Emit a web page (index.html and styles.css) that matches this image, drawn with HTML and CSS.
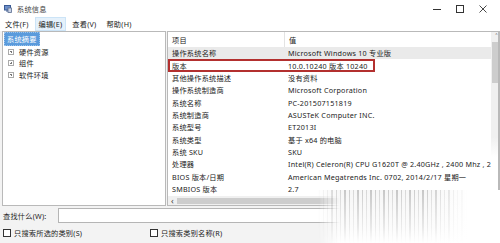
FILE: index.html
```html
<!DOCTYPE html>
<html lang="zh-CN">
  <head>
    <meta charset="UTF-8" />
    <title>系统信息</title>
    <link rel="stylesheet" href="styles.css">
  </head>
  <body>
    <div class="window">
      <!-- Title bar -->
      <div class="titlebar">
        <svg class="app-icon" width="8" height="8" viewBox="0 0 8 8">
          <rect x="0.5" y="0.5" width="6" height="4.5" fill="#6d8fc9" stroke="#3a5a94" stroke-width="1" />
          <rect x="2" y="5.5" width="3" height="1" fill="#3a5a94" />
          <rect x="4" y="3" width="3.5" height="4.5" fill="#c9d3e6" stroke="#5a6d8f" stroke-width="0.8" />
        </svg>
        <span class="title">系统信息</span>
        <div class="controls">
          <svg width="8" height="8" viewBox="0 0 8 8"><path d="M0 4.5h8" stroke="#333" stroke-width="1" /></svg>
          <svg width="8" height="8" viewBox="0 0 8 8"><rect x="0.5" y="0.5" width="7" height="7" fill="none" stroke="#333" stroke-width="1" /></svg>
          <svg width="8" height="8" viewBox="0 0 8 8"><path d="M0.5 0.5l7 7M7.5 0.5l-7 7" stroke="#333" stroke-width="0.9" /></svg>
        </div>
      </div>

      <!-- Menu bar -->
      <div class="menubar">
        <span class="menu-item">文件(F)</span>
        <span class="menu-item active">编辑(E)</span>
        <span class="menu-item">查看(V)</span>
        <span class="menu-item">帮助(H)</span>
      </div>

      <!-- Tree + list -->
      <div class="main">
        <div class="tree">
          <div class="tree-item"><span class="selected">系统摘要</span></div>
          <div class="tree-item sub"><span class="expander"></span>硬件资源</div>
          <div class="tree-item sub"><span class="expander"></span>组件</div>
          <div class="tree-item sub"><span class="expander"></span>软件环境</div>
        </div>

        <div class="list">
          <div class="list-body">
            <div class="row head"><span class="key">项目</span><span class="val">值</span></div>
            <div class="row hover"><span class="key">操作系统名称</span><span class="val">Microsoft Windows 10 专业版</span></div>
            <div class="row"><span class="key">版本</span><span class="val">10.0.10240 版本 10240</span></div>
            <div class="row"><span class="key">其他操作系统描述</span><span class="val">没有资料</span></div>
            <div class="row"><span class="key">操作系统制造商</span><span class="val">Microsoft Corporation</span></div>
            <div class="row"><span class="key">系统名称</span><span class="val">PC-201507151819</span></div>
            <div class="row"><span class="key">系统制造商</span><span class="val">ASUSTeK Computer INC.</span></div>
            <div class="row"><span class="key">系统型号</span><span class="val">ET2013I</span></div>
            <div class="row"><span class="key">系统类型</span><span class="val">基于 x64 的电脑</span></div>
            <div class="row"><span class="key">系统 SKU</span><span class="val">SKU</span></div>
            <div class="row"><span class="key">处理器</span><span class="val">Intel(R) Celeron(R) CPU G1620T @ 2.40GHz , 2400 Mhz , 2</span></div>
            <div class="row"><span class="key">BIOS 版本/日期</span><span class="val">American Megatrends Inc. 0702, 2014/2/17 星期一</span></div>
            <div class="row"><span class="key">SMBIOS 版本</span><span class="val">2.7</span></div>
            <div class="highlight"></div>
          </div>
          <div class="vscroll">
            <span class="arrow">&#708;</span>
            <div class="thumb"></div>
          </div>
          <div class="hscroll">
            <span class="arrow">&lsaquo;</span>
            <div class="thumb"></div>
          </div>
        </div>
      </div>

      <!-- Search -->
      <div class="search">
        <label class="search-label">查找什么(W):</label>
        <div class="search-input"></div>
      </div>
      <div class="options">
        <span class="option"><span class="check"></span>只搜索所选的类别(S)</span>
        <span class="option"><span class="check"></span>只搜索类别名称(R)</span>
      </div>

      <div class="smudge"></div>
    </div>
  </body>
</html>
```

FILE: styles.css
```css
/* Base */
* {
  margin: 0;
  padding: 0;
  box-sizing: border-box;
}

body {
  width: 500px;
  height: 243px;
  overflow: hidden;
  background-color: #fff;
  font-family: "Noto Sans", "Noto Sans CJK SC", sans-serif;
  font-size: 7.2px;
  letter-spacing: 0.22px;
  color: #222;
}

.window {
  position: relative;
  width: 500px;
  height: 243px;
  background-color: #f3f3f3;
}

/* Title bar */
.titlebar {
  height: 17px;
  background-color: #fff;
  display: flex;
  align-items: center;
  padding-left: 4px;
}

.app-icon {
  margin-right: 5px;
}

.title {
  color: #444;
}

.controls {
  margin-left: auto;
  display: flex;
  align-items: center;
  gap: 15px;
  padding-right: 13px;
}

/* Menu bar */
.menubar {
  height: 14px;
  background-color: #fff;
  display: flex;
  align-items: stretch;
  padding-left: 1px;
}

.menu-item {
  display: flex;
  align-items: center;
  padding: 0 3px;
  margin-right: 2px;
  border: 1px solid transparent;
}

.menu-item.active {
  background-color: #e5f1fb;
  border-color: #cce4f7;
}

/* Main panes */
.main {
  display: flex;
  height: 175px;
  padding-left: 2px;
  gap: 1px;
}

.tree {
  width: 164px;
  background-color: #fff;
  border: 1px solid #b9b9b9;
  padding: 1px 0 0 1px;
}

.tree-item {
  height: 11.5px;
  display: flex;
  align-items: center;
}

.tree-item:first-child {
  height: 12px;
  margin-bottom: 1px;
}

.tree-item .selected {
  background-color: #5b9bdc;
  color: #fff;
  padding: 1px 2px;
  border: 1px dotted #9cc4ec;
}

.tree-item.sub {
  padding-left: 4px;
}

.expander {
  width: 6px;
  height: 6px;
  border: 1px solid #aaa;
  position: relative;
  margin-right: 5px;
}

.expander::before,
.expander::after {
  content: "";
  position: absolute;
  background-color: #777;
}

.expander::before {
  left: 1px;
  top: 1.5px;
  width: 2px;
  height: 1px;
}

.expander::after {
  left: 1.5px;
  top: 1px;
  width: 1px;
  height: 2px;
}

.list {
  flex: 1;
  background-color: #fff;
  border: 1px solid #b9b9b9;
  border-right-width: 2px;
  display: grid;
  grid-template-columns: 1fr 11px;
  grid-template-rows: 1fr 9px;
  overflow: hidden;
}

.list-body {
  position: relative;
}

.row {
  display: flex;
  height: 12.35px;
  align-items: center;
  white-space: nowrap;
}

.row.head {
  height: 15px;
}

.row.hover {
  background-color: #eaeaea;
  margin-right: -11px;
}

.key {
  width: 116px;
  flex-shrink: 0;
  padding-left: 4px;
}

.head .val {
  border-left: 1px solid #e3e3e3;
  height: 15px;
  display: flex;
  align-items: center;
}

.val {
  padding-left: 4px;
}

.highlight {
  position: absolute;
  left: 0;
  top: 27px;
  width: 207px;
  height: 13px;
  border: 2px solid #b3302f;
}

/* Scrollbars */
.vscroll {
  position: relative;
  background: linear-gradient(to bottom, #f0f0f0 0, #f0f0f0 105px, rgba(240, 240, 240, 0) 125px);
}

.vscroll .arrow {
  display: block;
  text-align: center;
  font-size: 8px;
  line-height: 10px;
  color: #555;
}

.vscroll .thumb {
  margin: 0 1px;
  height: 41px;
  background-color: #cdcdcd;
}

.hscroll {
  grid-column: 1 / 3;
  background-color: #f0f0f0;
  display: flex;
  align-items: center;
}

.hscroll .arrow {
  width: 9px;
  text-align: center;
  font-size: 9px;
  line-height: 8px;
  color: #444;
}

.hscroll .thumb {
  flex: 1;
  height: 6px;
  background-color: #cdcdcd;
}

/* Search area */
.search {
  display: flex;
  align-items: center;
  height: 17px;
  margin-top: 1px;
  padding-left: 3px;
}

.search-label {
  width: 55px;
}

.search-input {
  width: 380px;
  height: 15px;
  background-color: #fff;
  border: 1px solid #b5b5b5;
}

.options {
  display: flex;
  align-items: center;
  height: 18px;
  padding-left: 3px;
}

.option {
  display: flex;
  align-items: center;
  width: 147px;
}

.check {
  width: 8px;
  height: 8px;
  border: 1px solid #333;
  background-color: #fff;
  margin-right: 3px;
}

/* Faded corner of the picture */
.smudge {
  position: absolute;
  left: 318px;
  top: 190px;
  width: 182px;
  height: 53px;
  background:
    linear-gradient(to bottom, rgba(255, 255, 255, 0) 0, rgba(255, 255, 255, 0.6) 70%, #fff 100%),
    linear-gradient(to right, rgba(255, 255, 255, 0) 60%, #fff 82%),
    repeating-linear-gradient(90deg, rgba(110, 110, 110, 0.35) 0 2px, rgba(255, 255, 255, 0) 2px 5px, rgba(80, 80, 80, 0.25) 5px 6px, rgba(255, 255, 255, 0) 6px 9px, rgba(140, 140, 140, 0.3) 9px 10px, rgba(255, 255, 255, 0) 10px 13px),
    #f7f7f7;
  -webkit-mask-image: linear-gradient(to right, transparent 0, #000 22px);
  mask-image: linear-gradient(to right, transparent 0, #000 22px);
}
```
